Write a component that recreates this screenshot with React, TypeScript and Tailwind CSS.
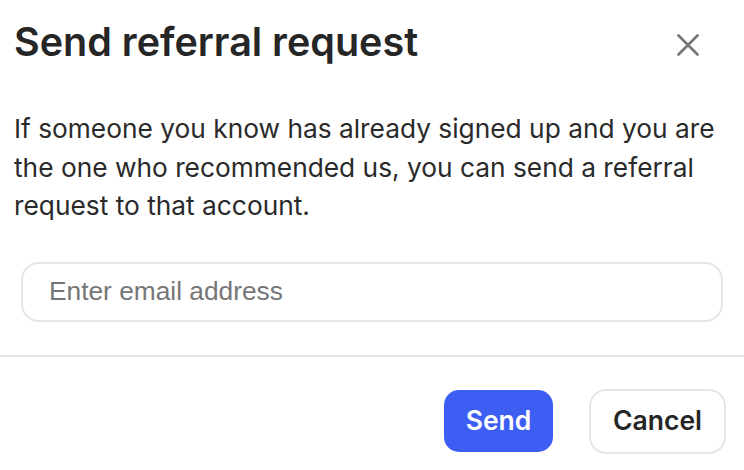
import React from "react";

export default function App() {
  return (
    <div className="w-[744px] h-[470px] bg-white overflow-hidden" style={{ fontFamily: "Inter, 'Noto Sans', sans-serif" }}>
      <div className="flex items-center justify-between pl-[14px] pr-[45px] pt-[18px]">
        <h1 className="text-[39.5px] leading-[48px] font-semibold text-[#262626]">Send referral request</h1>
        <button className="w-[22px] h-[22px] flex items-center justify-center text-[#757575] mt-[6px]">
          <svg width="22" height="22" viewBox="0 0 22 22" fill="none" stroke="currentColor" strokeWidth="2.6" strokeLinecap="round">
            <path d="M1.5 1.5L20.5 20.5M20.5 1.5L1.5 20.5" />
          </svg>
        </button>
      </div>
      <p className="pl-[14px] pr-[20px] mt-[44px] text-[26.3px] leading-[38.5px] text-[#2a2a2a]">
        If someone you know has already signed up and you are the one who recommended us, you can send a referral request to that account.
      </p>
      <div className="px-[21px] mt-[36px]">
        <input
          className="w-full h-[60px] rounded-[18px] border-2 border-[#e6e6e6] px-[26px] text-[26.3px] outline-none placeholder:text-[#767676]"
          style={{ fontFamily: "'Liberation Sans', Arial, sans-serif" }}
          placeholder="Enter email address"
        />
      </div>
      <div className="mt-[33px] border-t-2 border-[#e6e6e6]" />
      <div className="flex justify-end items-center gap-[36px] pr-[18px] pt-[32px]">
        <button className="w-[109px] h-[62px] rounded-[15px] bg-[#3d5ef2] text-white text-[26.5px] font-semibold">Send</button>
        <button className="w-[137px] h-[65px] rounded-[17px] border-2 border-[#e6e6e6] bg-white text-[#262626] text-[26.5px] font-semibold">Cancel</button>
      </div>
    </div>
  );
}
